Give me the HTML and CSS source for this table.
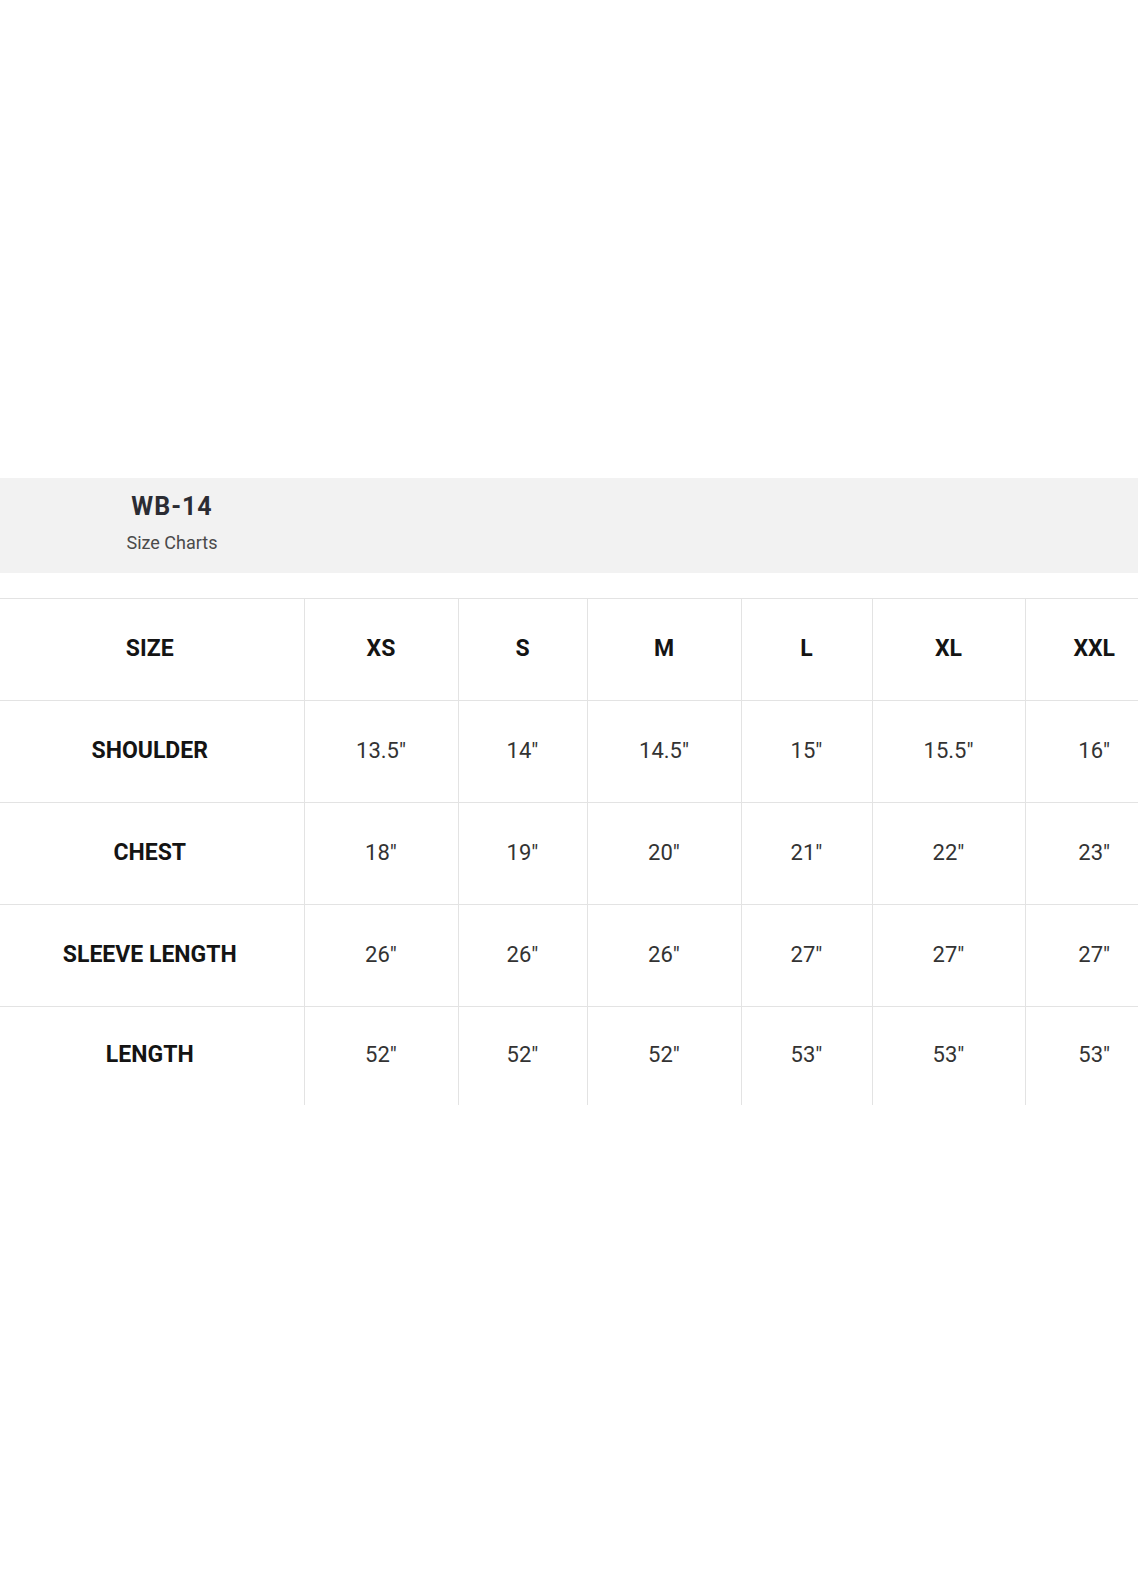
FILE: index.html
```html
<!DOCTYPE html>
<html lang="en">
<head>
<meta charset="utf-8">
<title>WB-14 Size Charts</title>
<link rel="stylesheet" href="styles.css">
</head>
<body>
<div class="page">
  <div class="top-space"></div>
  <div class="banner">
    <div class="banner-title">
      <div class="code">WB-14</div>
      <div class="sub">Size Charts</div>
    </div>
  </div>
  <div class="table-wrap">
    <table class="chart">
      <colgroup>
        <col class="c0"><col class="c1"><col class="c2"><col class="c3"><col class="c4"><col class="c5"><col class="c6">
      </colgroup>
      <tr class="head">
        <th class="label">SIZE</th><th>XS</th><th>S</th><th>M</th><th>L</th><th>XL</th><th>XXL</th>
      </tr>
      <tr>
        <th class="label">SHOULDER</th><td>13.5"</td><td>14"</td><td>14.5"</td><td>15"</td><td>15.5"</td><td>16"</td>
      </tr>
      <tr>
        <th class="label">CHEST</th><td>18"</td><td>19"</td><td>20"</td><td>21"</td><td>22"</td><td>23"</td>
      </tr>
      <tr>
        <th class="label">SLEEVE LENGTH</th><td>26"</td><td>26"</td><td>26"</td><td>27"</td><td>27"</td><td>27"</td>
      </tr>
      <tr class="last">
        <th class="label">LENGTH</th><td>52"</td><td>52"</td><td>52"</td><td>53"</td><td>53"</td><td>53"</td>
      </tr>
    </table>
  </div>
</div>
</body>
</html>
```
FILE: styles.css
```css
html, body {
  margin: 0;
  padding: 0;
  background: #ffffff;
}
body {
  width: 1138px;
  height: 1584px;
  overflow: hidden;
  font-family: Roboto, "Liberation Sans", Arial, sans-serif;
}
.page {
  display: flex;
  flex-direction: column;
}
.top-space {
  height: 478px;
}
.banner {
  height: 95px;
  background: #f2f2f2;
  display: flex;
}
.banner-title {
  width: 344px;
  display: flex;
  flex-direction: column;
  align-items: center;
  padding-top: 14px;
}
.code {
  font-size: 25px;
  line-height: 30px;
  font-weight: 700;
  letter-spacing: 1px;
  color: #2b2c33;
}
.sub {
  margin-top: 10px;
  font-size: 18px;
  line-height: 22px;
  color: #4a4a4a;
}
.table-wrap {
  margin-top: 25px;
  width: 1138px;
  overflow: hidden;
}
.chart {
  width: 1163px;
  border-collapse: collapse;
  table-layout: fixed;
}
.c0 { width: 304px; }
.c1 { width: 154px; }
.c2 { width: 129px; }
.c3 { width: 154px; }
.c4 { width: 131px; }
.c5 { width: 153px; }
.c6 { width: 138px; }
.chart th, .chart td {
  height: 98px;
  padding: 0 0 3px 0;
  text-align: center;
  vertical-align: middle;
  border: 1px solid #e3e3e3;
  font-size: 22px;
}
.chart tr:first-child th {
  border-top: 1px solid #e3e3e3;
}
.chart tr > :first-child {
  border-left: none;
  padding-right: 4px;
}
.chart tr > :last-child {
  border-right: none;
}
.chart tr.last th, .chart tr.last td {
  border-bottom: none;
  height: 95px;
}
.chart th {
  font-weight: 700;
  font-size: 23px;
  color: #141414;
}
.chart td {
  font-weight: 400;
  color: #333333;
}
```
